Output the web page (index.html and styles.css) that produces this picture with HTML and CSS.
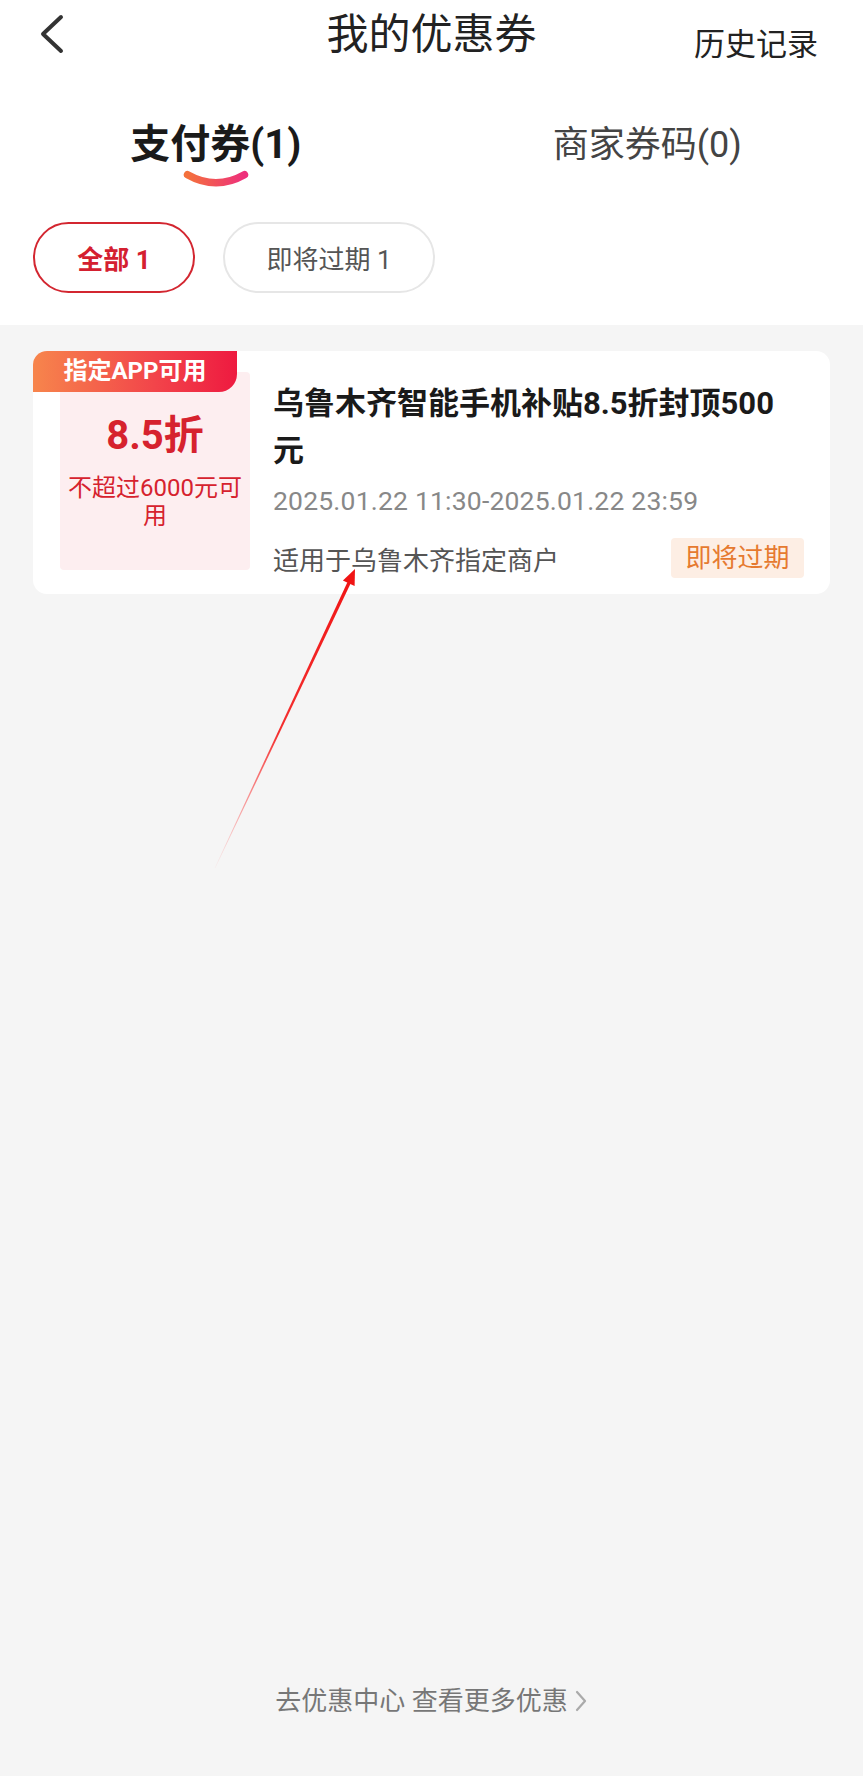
FILE: index.html
```html
<!DOCTYPE html>
<html lang="zh-CN">
<head>
<meta charset="utf-8">
<title>我的优惠券</title>
<link rel="stylesheet" href="styles.css">
</head>
<body>
<div class="page">
  <header class="topbar">
    <div class="back">
      <svg width="24" height="40" viewBox="0 0 24 40"><polyline points="21,3 3,20 21,37" fill="none" stroke="#333" stroke-width="4" stroke-linecap="round" stroke-linejoin="round"/></svg>
    </div>
    <h1 class="title">我的优惠券</h1>
    <div class="history">历史记录</div>
  </header>

  <nav class="tabs">
    <div class="tab active">
      <span class="tab-text">支付券(1)</span>
      <svg class="swoosh" width="70" height="19" viewBox="0 0 70 19">
        <defs><linearGradient id="sw" x1="0" y1="0" x2="1" y2="0"><stop offset="0" stop-color="#f4713c"/><stop offset="1" stop-color="#ee2f7c"/></linearGradient></defs>
        <path d="M5 5 Q35 22 65 5" fill="none" stroke="url(#sw)" stroke-width="8" stroke-linecap="round"/>
      </svg>
    </div>
    <div class="tab">
      <span class="tab-text">商家券码(0)</span>
    </div>
  </nav>

  <div class="chips">
    <div class="chip selected">全部 1</div>
    <div class="chip">即将过期 1</div>
  </div>

  <main class="list">
    <div class="card">
      <div class="tag">指定APP可用</div>
      <div class="discount">
        <div class="rate">8.5折</div>
        <div class="limit">不超过6000元可用</div>
      </div>
      <div class="info">
        <div class="name">乌鲁木齐智能手机补贴8.5折封顶500元</div>
        <div class="date">2025.01.22 11:30-2025.01.22 23:59</div>
        <div class="bottom">
          <span class="scope">适用于乌鲁木齐指定商户</span>
          <span class="expiring">即将过期</span>
        </div>
      </div>
    </div>
  </main>

  <footer class="more">
    <span>去优惠中心 查看更多优惠</span>
    <svg width="14" height="24" viewBox="0 0 14 24"><polyline points="3,3 11,12 3,21" fill="none" stroke="#aaa" stroke-width="2.2" stroke-linecap="round" stroke-linejoin="round"/></svg>
  </footer>

  <svg class="arrow" width="170" height="320" viewBox="0 0 170 320">
    <defs><linearGradient id="ar" gradientUnits="userSpaceOnUse" x1="10" y1="308" x2="150" y2="10"><stop offset="0" stop-color="#ff5050" stop-opacity="0.05"/><stop offset="0.45" stop-color="#f43030"/><stop offset="1" stop-color="#f01414"/></linearGradient></defs>
    <polygon points="10.3,308.1 145.6,23.4 142.5,21.9 9.7,307.9" fill="url(#ar)"/>
    <polygon points="150,9 149.6,26 137.9,20.4" fill="#f01414"/>
  </svg>
</div>
</body>
</html>
```

FILE: styles.css
```css
* { box-sizing: border-box; }
html, body { margin: 0; padding: 0; }
body {
  font-family: Roboto, "Noto Sans CJK SC", sans-serif;
  color: #1f1f1f;
  background: #f5f5f5;
}
.page {
  position: relative;
  width: 863px;
  min-height: 1776px;
  display: flex;
  flex-direction: column;
  background: #f5f5f5;
}

/* top bar */
.topbar {
  height: 68px;
  background: #fff;
  display: grid;
  grid-template-columns: 1fr auto 1fr;
  align-items: start;
}
.back {
  padding: 14px 0 0 40px;
  height: 68px;
}
.back svg { display: block; }
.title {
  margin: 0;
  padding-top: 9px;
  font-size: 42px;
  line-height: 52px;
  font-weight: 400;
  color: #222;
}
.history {
  justify-self: end;
  padding: 26px 45px 0 0;
  font-size: 31px;
  line-height: 38px;
  color: #222;
}

/* tabs */
.tabs {
  display: flex;
  background: #fff;
  padding-top: 53px;
}
.tab {
  flex: 1;
  display: flex;
  flex-direction: column;
  align-items: center;
  height: 67px;
}
.tab-text {
  font-size: 36px;
  line-height: 48px;
  color: #444;
}
.tab.active .tab-text {
  font-size: 40px;
  font-weight: 700;
  color: #1a1a1a;
}
.swoosh { display: block; margin-top: 1px; }

/* chips */
.chips {
  display: flex;
  gap: 28px;
  padding: 34px 33px 32px;
  background: #fff;
}
.chip {
  height: 71px;
  border: 2px solid #e6e6e6;
  border-radius: 36px;
  display: flex;
  align-items: center;
  justify-content: center;
  font-size: 26px;
  color: #555;
  width: 212px;
}
.chip.selected {
  width: 162px;
  border-color: #d32630;
  color: #d42030;
  font-weight: 700;
}

/* list */
.list {
  flex: 1;
  padding: 26px 33px 0;
}
.card {
  position: relative;
  background: #fff;
  border-radius: 14px;
  display: flex;
  align-items: flex-start;
  height: 243px;
  padding-left: 27px;
}
.tag {
  position: absolute;
  left: 0;
  top: 0;
  width: 204px;
  height: 41px;
  border-radius: 14px 0 18px 0;
  background: linear-gradient(90deg, #f7854c 0%, #f2444a 60%, #ee1a40 100%);
  color: #fff;
  font-size: 24px;
  font-weight: 700;
  line-height: 41px;
  text-align: center;
  z-index: 1;
}
.discount {
  margin-top: 21px;
  width: 190px;
  height: 198px;
  background: #fdeef0;
  border-radius: 4px;
  padding: 40px 8px 0;
  text-align: center;
  color: #d6222e;
}
.rate {
  font-size: 40px;
  font-weight: 700;
  line-height: 48px;
}
.limit {
  margin-top: 14px;
  font-size: 24px;
  line-height: 28px;
}
.info {
  flex: 1;
  margin: 0 26px 0 23px;
  padding-top: 29px;
}
.name {
  font-size: 31px;
  font-weight: 700;
  line-height: 47px;
  color: #1a1a1a;
}
.date {
  margin-top: 10px;
  font-size: 26.5px;
  line-height: 34px;
  letter-spacing: 0.2px;
  color: #888;
}
.bottom {
  margin-top: 20px;
  display: flex;
  justify-content: space-between;
  align-items: center;
  height: 40px;
}
.scope {
  font-size: 26px;
  color: #555;
}
.expiring {
  width: 133px;
  height: 40px;
  background: #fdeee4;
  border-radius: 4px;
  color: #e67a30;
  font-size: 26px;
  line-height: 40px;
  text-align: center;
}

/* footer */
.more {
  display: flex;
  justify-content: center;
  align-items: center;
  gap: 6px;
  padding-bottom: 57px;
  height: 93px;
  font-size: 26px;
  line-height: 36px;
  color: #777;
}
.more svg { display: block; }

.arrow {
  position: absolute;
  left: 205px;
  top: 560px;
}
```
